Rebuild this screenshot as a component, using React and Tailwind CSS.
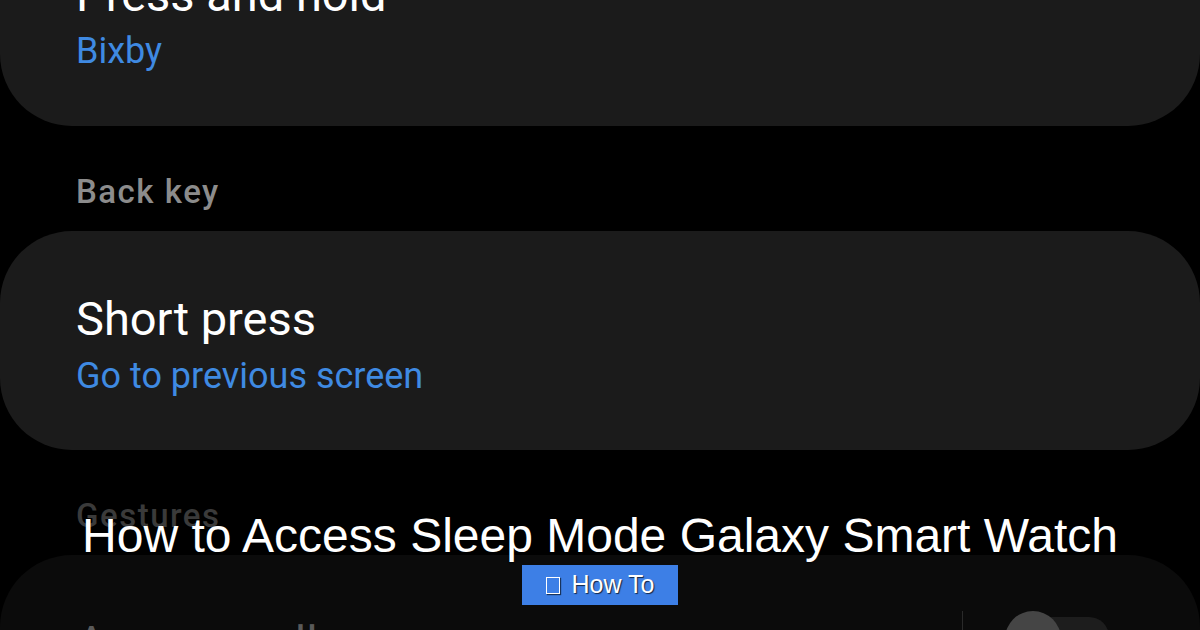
import React from "react";

const SettingCard = ({ title, value, dim, children }) => (
	<div
		className={`flex items-start justify-between rounded-[72px] pt-[60px] pb-[52px] pl-[76px] pr-[91px] ${
			dim ? "bg-[#0b0b0b]" : "bg-[#1b1b1b]"
		}`}
	>
		<div className="flex flex-col gap-[7px]">
			<div className={`text-[47px] leading-[1.2] ${dim ? "text-[#5a5a5a]" : "text-white"}`}>{title}</div>
			{value && <div className="text-[36px] leading-[1.2] text-[#3f8ae2]">{value}</div>}
		</div>
		{children}
	</div>
);

const SectionLabel = ({ children, dim }) => (
	<div
		className={`pl-[76px] pt-[46px] pb-[20px] text-[33px] leading-[1.2] font-medium tracking-[1.5px] ${
			dim ? "text-[#3a3a3a]" : "text-[#8c8c8c]"
		}`}
	>
		{children}
	</div>
);

const Toggle = () => (
	<div className="flex items-start gap-[46px] -mt-[4px]">
		<div className="w-px h-[80px] bg-[#2a2a2a]"></div>
		<div className="relative w-[100px] h-[40px] mt-[6px] rounded-full bg-[#1d1d1d]">
			<div className="absolute -left-[4px] -top-[6px] w-[56px] h-[56px] rounded-full bg-[#454545]"></div>
		</div>
	</div>
);

export default function App() {
	return (
		<div className="relative w-[1200px] h-[630px] overflow-hidden bg-black font-['Roboto',sans-serif]">
			<div className="flex flex-col -mt-[93px]">
				<SettingCard title="Press and hold" value="Bixby" />
				<SectionLabel>Back key</SectionLabel>
				<SettingCard title="Short press" value="Go to previous screen" />
				<SectionLabel dim>Gestures</SectionLabel>
				<SettingCard title="Answer calls" value="Double press" dim>
					<Toggle />
				</SettingCard>
			</div>

			<div className="absolute left-0 right-0 top-[510px] flex flex-col items-center gap-[3px] font-['Liberation_Sans',Arial,sans-serif]">
				<h1 className="text-[48px] leading-[52px] text-white [text-shadow:0_1px_2px_rgba(0,0,0,0.6)]">
					How to Access Sleep Mode Galaxy Smart Watch
				</h1>
				<div className="flex items-center gap-[12px] h-[40px] px-[24px] bg-[#3d7fe6] text-white text-[25px] [text-shadow:1px_1px_1px_rgba(0,0,0,0.7)]">
					<span className="inline-block w-[14px] h-[17px] border-[1.5px] border-white shadow-[1px_1px_1px_rgba(0,0,0,0.6)]"></span>
					<span>How To</span>
				</div>
			</div>
		</div>
	);
}
